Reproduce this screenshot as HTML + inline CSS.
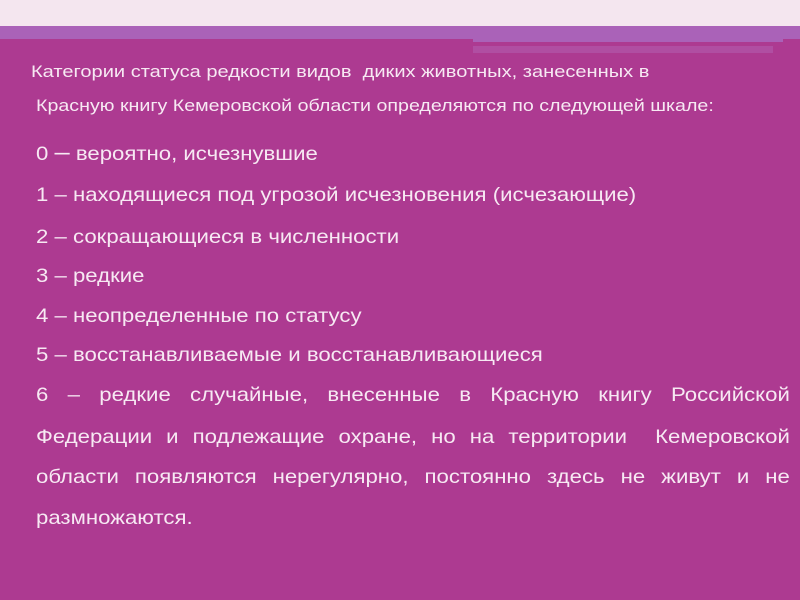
<!DOCTYPE html>
<html><head><meta charset="utf-8"><style>
html,body{margin:0;padding:0}
body{width:800px;height:600px;background:#ad3a91;position:relative;overflow:hidden;font-family:"Liberation Sans",sans-serif;color:#f7e9f3}
.top{position:absolute;left:0;top:0;width:800px;height:26px;background:#f4e6ef}
.band{position:absolute;left:0;top:26px;width:800px;height:13px;background:#aa62b8}
.b3{position:absolute;left:473px;top:39px;width:310px;height:3px;background:#aa62b8}
.b4{position:absolute;left:473px;top:46px;width:300px;height:7px;background:#b04ea2}
.t{position:absolute;white-space:nowrap;transform-origin:0 0}
.s{font-size:17px;transform:scaleX(1.18)}
.l{font-size:19.5px;left:36px;transform:scaleX(1.137)}
.j{position:absolute;left:36px;width:663px;font-size:19.5px;text-align:justify;text-align-last:justify;white-space:nowrap;transform:scaleX(1.137);transform-origin:0 0}
</style></head><body>
<div class="top"></div><div class="band"></div><div class="b3"></div><div class="b4"></div>
<div class="t s" style="left:31px;top:62px">Категории статуса редкости видов &nbsp;диких животных, занесенных в</div>
<div class="t s" style="left:36px;top:96px;transform:scaleX(1.155)">Красную книгу Кемеровской области определяются по следующей шкале:</div>
<div class="t l" style="top:141px">0 <span style="font-size:24px;line-height:1">–</span> вероятно, исчезнувшие</div>
<div class="t l" style="top:184px">1 – находящиеся под угрозой исчезновения (исчезающие)</div>
<div class="t l" style="top:226px">2 – сокращающиеся в численности</div>
<div class="t l" style="top:265px">3 – редкие</div>
<div class="t l" style="top:305px">4 – неопределенные по статусу</div>
<div class="t l" style="top:344px">5 – восстанавливаемые и восстанавливающиеся</div>
<div class="j" style="top:384px">6 – редкие случайные, внесенные в Красную книгу Российской</div>
<div class="j" style="top:426px">Федерации и подлежащие охране, но на территории &nbsp;Кемеровской</div>
<div class="j" style="top:466px">области появляются нерегулярно, постоянно здесь не живут и не</div>
<div class="t l" style="top:507px">размножаются.</div>
</body></html>
